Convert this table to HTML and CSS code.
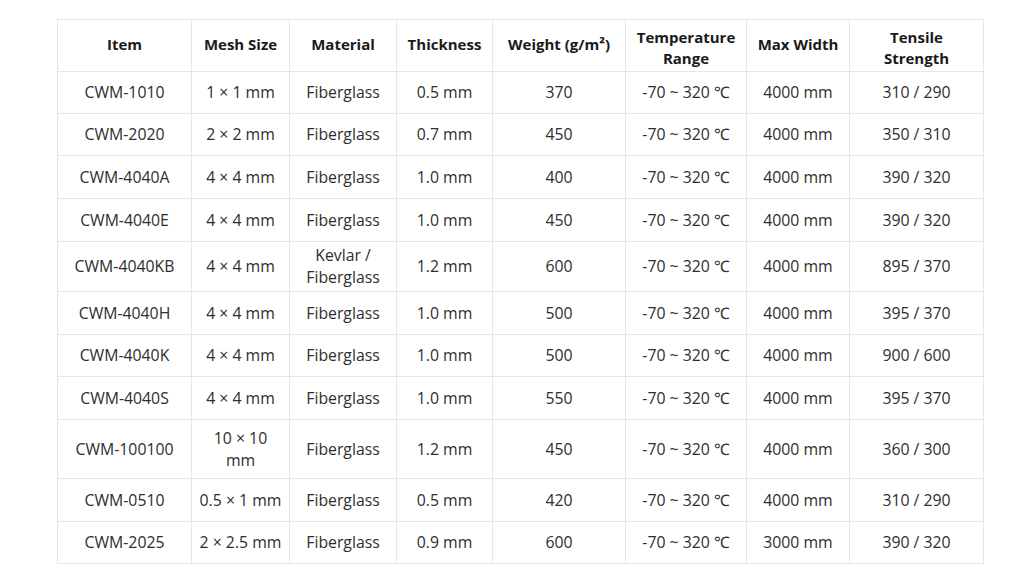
FILE: index.html
```html
<!DOCTYPE html>
<html>
<head>
<meta charset="utf-8">
<link rel="stylesheet" href="styles.css">
</head>
<body>
<div class="wrap">
<table class="spec">
<colgroup>
<col class="c1"><col class="c2"><col class="c3"><col class="c4"><col class="c5"><col class="c6"><col class="c7"><col class="c8">
</colgroup>
<thead>
<tr class="h"><th>Item</th><th>Mesh Size</th><th>Material</th><th>Thickness</th><th>Weight (g/m²)</th><th class="two">Temperature<br>Range</th><th>Max Width</th><th class="two">Tensile<br>Strength</th></tr>
</thead>
<tbody>
<tr class="r42"><td>CWM-1010</td><td>1 × 1 mm</td><td>Fiberglass</td><td>0.5 mm</td><td>370</td><td>-70 ~ 320 ℃</td><td>4000 mm</td><td>310 / 290</td></tr>
<tr class="r42"><td>CWM-2020</td><td>2 × 2 mm</td><td>Fiberglass</td><td>0.7 mm</td><td>450</td><td>-70 ~ 320 ℃</td><td>4000 mm</td><td>350 / 310</td></tr>
<tr class="r43"><td>CWM-4040A</td><td>4 × 4 mm</td><td>Fiberglass</td><td>1.0 mm</td><td>400</td><td>-70 ~ 320 ℃</td><td>4000 mm</td><td>390 / 320</td></tr>
<tr class="r43"><td>CWM-4040E</td><td>4 × 4 mm</td><td>Fiberglass</td><td>1.0 mm</td><td>450</td><td>-70 ~ 320 ℃</td><td>4000 mm</td><td>390 / 320</td></tr>
<tr class="r50"><td>CWM-4040KB</td><td>4 × 4 mm</td><td>Kevlar /<br>Fiberglass</td><td>1.2 mm</td><td>600</td><td>-70 ~ 320 ℃</td><td>4000 mm</td><td>895 / 370</td></tr>
<tr class="r43"><td>CWM-4040H</td><td>4 × 4 mm</td><td>Fiberglass</td><td>1.0 mm</td><td>500</td><td>-70 ~ 320 ℃</td><td>4000 mm</td><td>395 / 370</td></tr>
<tr class="r42"><td>CWM-4040K</td><td>4 × 4 mm</td><td>Fiberglass</td><td>1.0 mm</td><td>500</td><td>-70 ~ 320 ℃</td><td>4000 mm</td><td>900 / 600</td></tr>
<tr class="r43"><td>CWM-4040S</td><td>4 × 4 mm</td><td>Fiberglass</td><td>1.0 mm</td><td>550</td><td>-70 ~ 320 ℃</td><td>4000 mm</td><td>395 / 370</td></tr>
<tr class="r59"><td>CWM-100100</td><td>10 × 10<br>mm</td><td>Fiberglass</td><td>1.2 mm</td><td>450</td><td>-70 ~ 320 ℃</td><td>4000 mm</td><td>360 / 300</td></tr>
<tr class="r43"><td>CWM-0510</td><td>0.5 × 1 mm</td><td>Fiberglass</td><td>0.5 mm</td><td>420</td><td>-70 ~ 320 ℃</td><td>4000 mm</td><td>310 / 290</td></tr>
<tr class="r42"><td>CWM-2025</td><td>2 × 2.5 mm</td><td>Fiberglass</td><td>0.9 mm</td><td>600</td><td>-70 ~ 320 ℃</td><td>3000 mm</td><td>390 / 320</td></tr>
</tbody>
</table>
</div>
</body>
</html>
```

FILE: styles.css
```css
html, body {
  margin: 0;
  padding: 0;
  background: #ffffff;
}
.wrap {
  padding: 19px 0 0 57px;
}
.spec {
  border-collapse: collapse;
  table-layout: fixed;
  width: 926px;
  font-family: "Open Sans", "Noto Sans", sans-serif;
  font-size: 15.8px;
  color: #2e2e2e;
}
.c1 { width: 134px; }
.c2 { width: 98px; }
.c3 { width: 107px; }
.c4 { width: 96px; }
.c5 { width: 133px; }
.c6 { width: 121px; }
.c7 { width: 103px; }
.c8 { width: 134px; }
.spec th, .spec td {
  border: 1px solid #e6e6e6;
  text-align: center;
  vertical-align: middle;
  padding: 0 2px 1px;
  line-height: 22px;
}
.spec th {
  font-weight: 700;
  color: #1a1a1a;
  font-size: 15px;
  line-height: 21px;
  padding-bottom: 3px;
}
.spec th.two {
  padding-top: 5px;
  padding-bottom: 0;
}
.h { height: 52px; }
.r42 { height: 42px; }
.r43 { height: 43px; }
.r50 { height: 50px; }
.r59 { height: 59px; }
```
